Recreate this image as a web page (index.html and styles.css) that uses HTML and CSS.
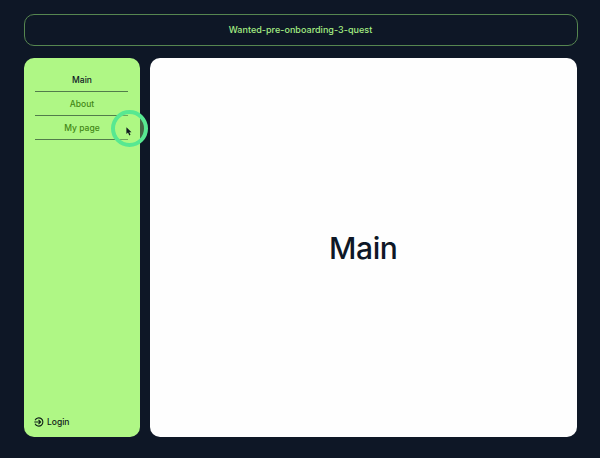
FILE: index.html
```html
<!DOCTYPE html>
<html lang="en">
<head>
<meta charset="utf-8">
<title>Wanted-pre-onboarding-3-quest</title>
<link rel="stylesheet" href="styles.css">
</head>
<body>
<div class="app">
  <header class="header"><span class="title">Wanted-pre-onboarding-3-quest</span></header>
  <div class="body">
    <aside class="sidebar">
      <nav class="nav">
        <a class="nav-item active"><span class="main-label">Main</span></a>
        <a class="nav-item"><span class="about-label">About</span></a>
        <a class="nav-item"><span class="page-label">My page</span></a>
      </nav>
      <a class="login">
        <svg class="login-icon" viewBox="0 0 10 10" fill="none" stroke="currentColor" stroke-width="1.1">
          <path d="M1.1 3.2A4.1 4.1 0 1 1 1.1 6.8M.3 5H6.4M4.5 2.9L6.6 5L4.5 7.1"/>
        </svg>
        <span class="login-label">Login</span>
      </a>
      <div class="click-ring">
        <svg class="cursor" viewBox="0 0 6 9"><path d="M.4.3V7L2 5.6L3.3 8.4L4.5 7.8L3.3 5.2H5.5Z" fill="#101820"/></svg>
      </div>
    </aside>
    <main class="content"><h1 class="heading">Main</h1></main>
  </div>
</div>
</body>
</html>
```
FILE: styles.css
```css
* { box-sizing: border-box; }
body {
  margin: 0;
  background: #0e1726;
  font-family: Inter, "Liberation Sans", sans-serif;
}
.app {
  height: 458px;
  padding: 14px 22.5px 21px 23.5px;
  display: flex;
  flex-direction: column;
  gap: 12px;
}
.header {
  height: 32px;
  border: 1px solid #568650;
  border-radius: 10px;
  display: flex;
  align-items: center;
  justify-content: center;
  padding-bottom: 1px;
  color: #a4ed83;
  font-size: 9px;
  font-weight: 500;
}
.title { letter-spacing: 0.03px; }
.body {
  flex: 1;
  display: flex;
  gap: 10px;
  padding-right: 1px;
}
.sidebar {
  position: relative;
  width: 116.5px;
  padding: 10.4px 12px 10px 11.5px;
  border-radius: 10px;
  background: #aff785;
  display: flex;
  flex-direction: column;
  justify-content: space-between;
}
.nav-item {
  display: flex;
  height: 23.8px;
  align-items: center;
  justify-content: center;
  padding: 1px 0 0 1px;
  border-bottom: 1px solid #527c4b;
  color: #438816;
  font-size: 8.5px;
  font-weight: 500;
}
.active { color: #0e1726; }
.login {
  display: flex;
  align-items: center;
  gap: 3px;
  height: 11px;
  color: #102019;
  font-size: 8.5px;
  font-weight: 500;
}
.login-icon { width: 10px; height: 10px; margin-left: -1px; }
.click-ring {
  position: absolute;
  left: 87.5px;
  top: 52px;
  width: 37px;
  height: 37px;
  border: 4px solid #58e891;
  border-radius: 50%;
  background: rgba(171, 250, 129, 0.35);
}
.cursor {
  position: absolute;
  left: 11px;
  top: 12.5px;
  width: 6px;
  height: 9px;
}
.content {
  flex: 1;
  border-radius: 10px;
  background: #fefefe;
  display: flex;
  align-items: center;
  justify-content: center;
}
.heading {
  margin: 0;
  color: #0e1726;
  font-size: 30px;
  font-weight: 500;
  letter-spacing: -0.4px;
}
```
